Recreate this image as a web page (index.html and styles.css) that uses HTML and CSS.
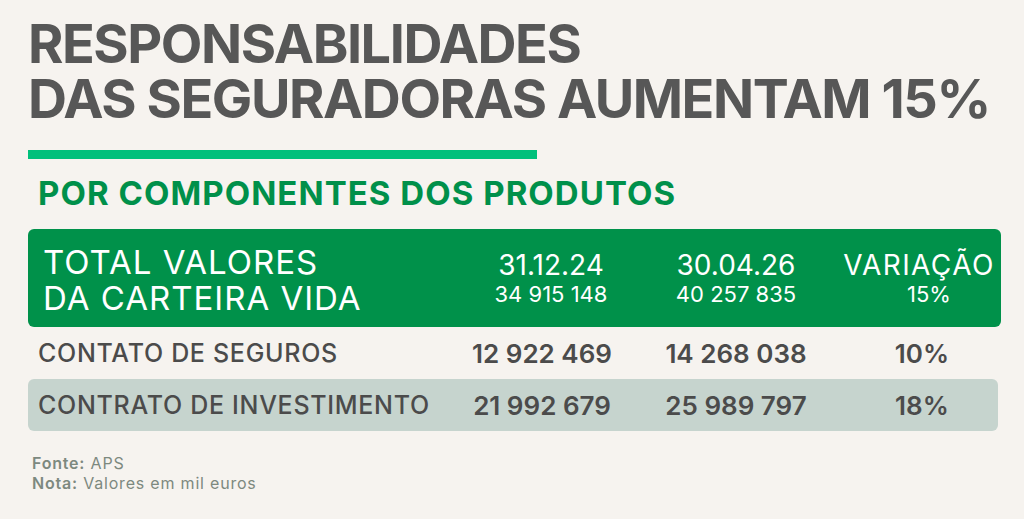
FILE: index.html
```html
<!DOCTYPE html>
<html lang="pt">
<head>
<meta charset="utf-8">
<title>Responsabilidades das seguradoras</title>
<link rel="stylesheet" href="styles.css">
</head>
<body>
<main class="page">
  <h1 class="title">RESPONSABILIDADES<br>DAS SEGURADORAS AUMENTAM 15%</h1>
  <div class="bar"></div>
  <h2 class="subtitle">POR COMPONENTES DOS PRODUTOS</h2>
  <section class="table">
    <div class="row head">
      <div class="label">TOTAL VALORES<br>DA CARTEIRA VIDA</div>
      <div class="cell c2"><span class="hd">31.12.24</span><span class="sub">34 915 148</span></div>
      <div class="cell c3"><span class="hd">30.04.26</span><span class="sub">40 257 835</span></div>
      <div class="cell c4"><span class="hd var">VARIAÇÃO</span><span class="sub pct">15%</span></div>
    </div>
    <div class="row body">
      <div class="label">CONTATO DE SEGUROS</div>
      <div class="cell c2 num">12 922 469</div>
      <div class="cell c3 num">14 268 038</div>
      <div class="cell c4 num">10%</div>
    </div>
    <div class="row body alt">
      <div class="label">CONTRATO DE INVESTIMENTO</div>
      <div class="cell c2 num">21 992 679</div>
      <div class="cell c3 num">25 989 797</div>
      <div class="cell c4 num">18%</div>
    </div>
  </section>
  <footer class="notes">
    <p><b>Fonte:</b> APS</p>
    <p><b>Nota:</b> Valores em mil euros</p>
  </footer>
</main>
</body>
</html>
```
FILE: styles.css
```css
html, body {
  margin: 0;
  padding: 0;
  background: #f6f3ef;
}
body {
  font-family: "Inter", "Noto Sans", sans-serif;
  width: 1024px;
  height: 519px;
  overflow: hidden;
}
.page {
  padding: 16px 0 0 28px;
  display: flex;
  flex-direction: column;
}
.title {
  margin: 0;
  font-size: 54px;
  line-height: 55px;
  font-weight: 700;
  color: #575757;
  letter-spacing: -1.45px;
}
.bar {
  width: 509px;
  height: 9px;
  background: #00c07b;
  margin-top: 24px;
}
.subtitle {
  margin: 14px 0 0 10px;
  font-size: 33px;
  line-height: 40px;
  font-weight: 700;
  color: #00904a;
  letter-spacing: 1.05px;
}
.table {
  margin-top: 16px;
  width: 973px;
  display: flex;
  flex-direction: column;
}
.row {
  display: grid;
  grid-template-columns: 438px 170px 200px 165px;
  align-items: center;
}
.head {
  background: #00914a;
  color: #ffffff;
  border-radius: 6px;
  height: 98px;
}
.head .label {
  padding-left: 15px;
  font-size: 33px;
  line-height: 36px;
  font-weight: 400;
  padding-top: 4px;
  letter-spacing: 1px;
}
.cell {
  text-align: center;
  display: flex;
  flex-direction: column;
  align-items: center;
}
.c4 { padding-left: 7px; }
.hd {
  font-size: 28px;
  line-height: 32px;
}
.var {
  letter-spacing: 1.4px;
  margin-right: 6px;
}
.sub {
  font-size: 22px;
  line-height: 26px;
}
.pct { padding-left: 14px; }
.body {
  height: 52px;
  color: #4b4b4b;
}
.body .label {
  padding-left: 10px;
  font-size: 25px;
  font-weight: 500;
  letter-spacing: 0.7px;
}
.body .c2 { padding-right: 18px; }
.num {
  font-size: 26px;
  font-weight: 600;
}
.alt {
  background: #c6d4ce;
  border-radius: 6px;
  width: 970px;
}
.notes {
  margin: 22px 0 0 4px;
  color: #7d897f;
  font-size: 16px;
  line-height: 20px;
  letter-spacing: 0.8px;
}
.notes p { margin: 0; }
.notes b { font-weight: 600; }
```
